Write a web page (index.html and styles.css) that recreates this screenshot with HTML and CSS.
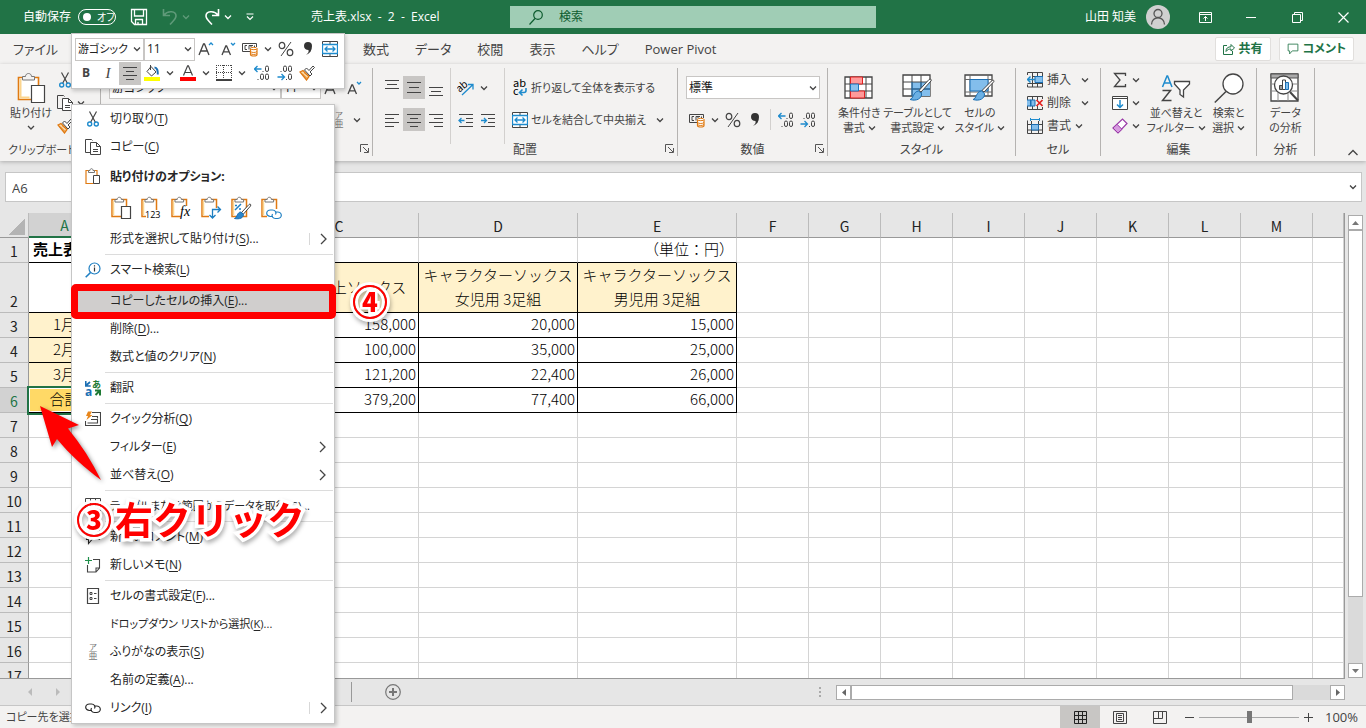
FILE: index.html
```html
<!DOCTYPE html>
<html lang="ja">
<head>
    <meta charset="UTF-8">
    <meta name="viewport" content="width=device-width, initial-scale=1.0">
    <title>売上表.xlsx - Excel</title>
    <link rel="stylesheet" href="styles.css">
</head>
<body>
    <!-- アイコン定義 -->
    <svg class="defs" aria-hidden="true">
        <symbol id="chev" viewBox="0 0 8 8"><path d="M1 2.5l3 3 3-3" fill="none" stroke="currentColor" stroke-width="1.3"/></symbol>
        <symbol id="cut" viewBox="0 0 16 16"><path d="M4.5 0.5l6 11M11.5 0.5l-6 11" stroke="#444" fill="none" stroke-width="1.2"/><circle cx="4.7" cy="13" r="2" fill="none" stroke="#1e8bcd" stroke-width="1.4"/><circle cx="11.3" cy="13" r="2" fill="none" stroke="#1e8bcd" stroke-width="1.4"/></symbol>
        <symbol id="copy" viewBox="0 0 16 16"><path d="M5.5 13.5h-5v-13h6l1 1" fill="none" stroke="#444"/><path d="M5.5 3.5h6l4 4v8h-10z" fill="#fff" stroke="#444"/><path d="M11.5 3.5v4h4M8 10.5h5M8 12.5h5" fill="none" stroke="#444"/></symbol>
        <symbol id="brush" viewBox="0 0 16 16"><path d="M1 7l3-1.5 6 6L7.5 15z" fill="#fbd8a5" stroke="#e07a12" stroke-width="1.3"/><path d="M3 8.5l5 5M5 7.5l5 4" stroke="#e07a12"/><path d="M5.5 5l2-2 2.500 2.500L14 1l1.500 1.500L11 7l2 2-2 2z" fill="#fff" stroke="#444"/></symbol>
        <symbol id="paste" viewBox="0 0 30 32"><path d="M2.5 5.5h20v22h-20z" fill="#fff" stroke="#e07a12" stroke-width="1.6"/><path d="M4.500 7v18.500h9" fill="none" stroke="#fbd58f" stroke-width="2"/><path d="M6.500 8V4.500h3c0-4 6-4 6 0h3V8z" fill="#f3f2f1" stroke="#777"/><path d="M15.500 13.500h13v17h-13z" fill="#fff" stroke="#444" stroke-width="1.200"/></symbol>
        <symbol id="clipbase" viewBox="0 0 22 24"><path d="M2 3.5h14.5v17H2z" fill="#fff" stroke="#e07a12" stroke-width="1.5"/><path d="M3.5 5v14" stroke="#fbd58f" stroke-width="1.5"/><path d="M5 6V3.5h2.200c0-3 4.200-3 4.200 0h2.200V6z" fill="#fff" stroke="#777"/></symbol>
        <symbol id="growA" viewBox="0 0 16 16"><path d="M1 14L5.5 3h1L11 14M2.8 10h6.5" fill="none" stroke="#444" stroke-width="1.3"/><path d="M11 4l2-2 2 2" fill="none" stroke="#1e8bcd" stroke-width="1.3"/></symbol>
        <symbol id="shrinkA" viewBox="0 0 16 16"><path d="M2 14L5.8 5h.8L10.5 14M3.5 10.8H9" fill="none" stroke="#444" stroke-width="1.3"/><path d="M11 2l2 2 2-2" fill="none" stroke="#1e8bcd" stroke-width="1.3"/></symbol>
        <symbol id="money" viewBox="0 0 16 16"><path d="M8 10.5H.5v-8h14V6" fill="none" stroke="#444"/><path d="M5 4.5H3v4h2M9 4.5H7v4M9 6.5v-2h2M12.5 4.5V6" fill="none" stroke="#444"/><path d="M8.5 8v5.5c0 2 6.500 2 6.500 0V8z" fill="#fff" stroke="#e07a12" stroke-width="1.2"/><ellipse cx="11.75" cy="7.5" rx="3.2" ry="1.2" fill="#fff" stroke="#e07a12"/><path d="M8.5 10.5c1 1.300 5.500 1.300 6.500 0M8.500 12.500c1 1.300 5.500 1.300 6.500 0" fill="none" stroke="#e07a12"/></symbol>
        <symbol id="percent" viewBox="0 0 16 16"><path d="M3 15L13 1" stroke="#444"/><ellipse cx="4" cy="4.5" rx="2.8" ry="3.2" fill="none" stroke="#444" stroke-width="1.2"/><ellipse cx="12" cy="11.5" rx="2.8" ry="3.2" fill="none" stroke="#444" stroke-width="1.2"/></symbol>
        <symbol id="comma" viewBox="0 0 16 16"><path d="M4 5a4 4 0 1 1 8 0c0 4.500-2 7.500-6 9 2-1.500 3-3 2.500-5C6 9 4 7.500 4 5z" fill="#333"/></symbol>
        <symbol id="merge" viewBox="0 0 16 16"><path d="M.5.5h15v15H.5zM8 .5v3M8 12.5v3" fill="#fff" stroke="#444"/><path d="M.5 3.5h15v9H.5z" fill="#fff" stroke="#1e8bcd" stroke-width="1.3"/><path d="M3 8h10M5.500 5.500L3 8l2.500 2.500M10.500 5.500L13 8l-2.500 2.500" fill="none" stroke="#1e8bcd" stroke-width="1.3"/></symbol>
        <symbol id="center" viewBox="0 0 16 16"><path d="M1 2.5h14M4 6.5h8M1 10.5h14M4 14.5h8" stroke="#444"/></symbol>
        <symbol id="left" viewBox="0 0 16 16"><path d="M1 2.5h14M1 6.5h9M1 10.5h14M1 14.5h9" stroke="#444"/></symbol>
        <symbol id="right" viewBox="0 0 16 16"><path d="M1 2.5h14M6 6.5h9M1 10.5h14M6 14.5h9" stroke="#444"/></symbol>
        <symbol id="vtop" viewBox="0 0 16 16"><path d="M1 .5h14M3 4.5h10M1 8.5h14" stroke="#444"/></symbol>
        <symbol id="vmid" viewBox="0 0 16 16"><path d="M1 2.5h14M3 7.5h10M1 12.5h14" stroke="#444"/></symbol>
        <symbol id="vbot" viewBox="0 0 16 16"><path d="M1 7.5h14M3 11.5h10M1 15.5h14" stroke="#444"/></symbol>
        <symbol id="fill" viewBox="0 0 16 16"><path d="M0 12h16v4H0z" fill="#ff0"/><path d="M7 1.5L12 7 7.5 11 3 6.5z" fill="#fff" stroke="#444"/><path d="M6.5 0v5" stroke="#444"/><path d="M10.5 2.5c2.500 0 3.500 3 3.300 7" fill="none" stroke="#1b6fb3" stroke-width="2"/></symbol>
        <symbol id="fontcolor" viewBox="0 0 16 16"><path d="M0 12h16v4H0z" fill="#f00"/><path d="M3.5 10.5L7.6.8h.8l4.100 9.700M5 7.500h6" fill="none" stroke="#444" stroke-width="1.2"/></symbol>
        <symbol id="border" viewBox="0 0 16 16"><path d="M.5 0v14M15.5 0v14M7.5 0v14M0 .5h16M0 7.5h16" stroke="#444" stroke-dasharray="1 1" fill="none"/><path d="M0 15h16" stroke="#000" stroke-width="1.5"/></symbol>
        <symbol id="decup" viewBox="0 0 16 16"><path d="M.5 4h7M3.500 1l-3 3 3 3" fill="none" stroke="#1e8bcd" stroke-width="1.3"/><g fill="none" stroke="#444"><path d="M8.5 6.5h1"/><rect x="11.5" y="1" width="3" height="5.5" rx="1.5"/><path d="M3.5 14.5h1"/><rect x="6.5" y="9" width="3" height="5.5" rx="1.5"/><rect x="11.5" y="9" width="3" height="5.5" rx="1.5"/></g></symbol>
        <symbol id="decdown" viewBox="0 0 16 16"><path d="M.5 12h7M4.500 9l3 3-3 3" fill="none" stroke="#1e8bcd" stroke-width="1.3"/><g fill="none" stroke="#444"><path d="M3.5 6.5h1"/><rect x="6.5" y="1" width="3" height="5.5" rx="1.5"/><rect x="11.5" y="1" width="3" height="5.5" rx="1.5"/><path d="M9 14.5h1"/><rect x="11.5" y="9" width="3" height="5.5" rx="1.5"/></g></symbol>
        <symbol id="outdent" viewBox="0 0 16 16"><path d="M1 2.5h14M8 6.5h7M8 10.5h7M1 14.5h14" stroke="#444"/><path d="M1 8.5h5.5M3.500 6L1 8.500 3.500 11" stroke="#1e8bcd" fill="none" stroke-width="1.3"/></symbol>
        <symbol id="indent" viewBox="0 0 16 16"><path d="M1 2.5h14M8 6.5h7M8 10.5h7M1 14.5h14" stroke="#444"/><path d="M1 8.5h5.5M4 6l2.500 2.500L4 11" stroke="#1e8bcd" fill="none" stroke-width="1.3"/></symbol>
        <symbol id="orient" viewBox="0 0 18 16"><text x="0" y="10" class="ic-text" font-size="10" transform="rotate(-40 5 8)">ab</text><path d="M5 15L16 4.500M11 4.500h5v5" fill="none" stroke="#1e8bcd" stroke-width="1.3"/></symbol>
        <symbol id="wrap" viewBox="0 0 16 18"><text x="1" y="8" class="ic-text" font-size="11">ab</text><text x="1" y="16" class="ic-text" font-size="11">c</text><path d="M14 9v2.500c0 1.500-1 2-2 2H8M10.500 10.500l-3 3 3 3" fill="none" stroke="#1e8bcd" stroke-width="1.6"/></symbol>
        <symbol id="launch" viewBox="0 0 9 9"><path d="M.5 8V.5H8M3 3l5 5M8.500 4v4.500H4" fill="none" stroke="#555"/></symbol>
        <symbol id="cond" viewBox="0 0 30 24"><path d="M1 1h27v21H1z" fill="#fff" stroke="#444" stroke-width="1.3"/><path d="M1 8h27M1 15h27M6 1v21M22 1v21" stroke="#444"/><path d="M6.5 1h12v7h-12zM6.5 15h14v7h-14z" fill="#ff9a9a" stroke="#e02020"/><path d="M6.5 8h8v7h-8z" fill="#8cc1ec" stroke="#1b76bd"/></symbol>
        <symbol id="fmttable" viewBox="0 0 32 28"><path d="M1 1h27v21H1z" fill="#fff" stroke="#444" stroke-width="1.3"/><path d="M10 8h18v14H10z" fill="#83beec"/><path d="M1 8h27M1 15h27M10 1v21M19 1v21" stroke="#444"/><path d="M10 15h18M19 8v14M10 8v14" stroke="#1b6fb3"/><path d="M29 7L19 18l-2-1.500L27 5.500c1.500-1 3 0 2 1.500z" fill="#fff" stroke="#444"/><path d="M16.500 17l3 2.500c.5 5-5 8-11.500 6 3.500-.5 3-8 8.500-8.500z" fill="#6bb0e4" stroke="#1b6fb3"/></symbol>
        <symbol id="cellstyle" viewBox="0 0 32 28"><path d="M1 1h27v21H1z" fill="#fff" stroke="#444" stroke-width="1.3"/><path d="M1 5.5h27M1 18h27M6 1v21M24 1v21" stroke="#666"/><path d="M6 5.5h18V17H6z" fill="#83beec" stroke="#1b6fb3"/><path d="M29.500 8L20 18l-2-1.500L27.500 7c1.500-1.500 3.500-.5 2 1z" fill="#fff" stroke="#444"/><path d="M17.500 17l3 2.500c.5 5-5 8-11.500 6 3.500-.5 3-8 8.500-8.500z" fill="#6bb0e4" stroke="#1b6fb3"/></symbol>
        <symbol id="cins" viewBox="0 0 16 16"><path d="M.5 3V.5h15V15H.5v-2.500M5.5.5V15M10.5.5V15M5 4.500h10.500M.5 11.500h15" fill="none" stroke="#444"/><path d="M8 4.500h8v6H8z" fill="#83beec" stroke="#1b6fb3"/><path d="M0 7.500h8M3.500 4.500l-3 3 3 3" fill="none" stroke="#1e8bcd" stroke-width="1.5"/></symbol>
        <symbol id="cdel" viewBox="0 0 16 16"><path d="M.5 5V1.500h15V4M5.500 1.500V5M10.500 1.500V5M.5 11v3.500h15V12M5.500 14.500V11M10.500 14.500V11" fill="none" stroke="#444"/><path d="M0 5h4v6H0M8 5H3.500v6H8z" fill="#83beec" stroke="#1b6fb3"/><path d="M9.500 5l6 6M15.500 5l-6 6" stroke="#e02020" stroke-width="1.6"/></symbol>
        <symbol id="cfmt" viewBox="0 0 16 16"><path d="M.5 2.500v13h15v-13M4.500 3v12.500M11.500 3v12.500M.5 6.500h15M.5 12h15" fill="none" stroke="#444"/><path d="M4.500 6.500h7V12h-7z" fill="#83beec" stroke="#1b6fb3"/><path d="M3.500 0v3M12.500 0v3M3.500 1.500h9" stroke="#1e8bcd"/></symbol>
        <symbol id="sigma" viewBox="0 0 16 16"><path d="M13.500 4V1.500H2.500L8 8l-5.500 6.500h11V12" fill="none" stroke="#444" stroke-width="1.3"/></symbol>
        <symbol id="filldown" viewBox="0 0 16 16"><path d="M.5 1.500h15v13H.5zM.5 3.500h15" fill="#fff" stroke="#444"/><path d="M8 5v7M5 9.500l3 3 3-3" fill="none" stroke="#1e8bcd" stroke-width="1.5"/></symbol>
        <symbol id="eraser" viewBox="0 0 16 16"><path d="M1 10l9.500-9L15 5.500 6 15z" fill="#fff" stroke="#9a3aa8" stroke-width="1.2"/><path d="M1 10l4-3.700 5 5L6 15z" fill="#d79be0" stroke="#9a3aa8"/></symbol>
        <symbol id="sort" viewBox="0 0 30 28"><path d="M1.500 13L6 2h.6L11 13M3 9h6.500" fill="none" stroke="#1e8bcd" stroke-width="1.5"/><path d="M1.500 16.500h8l-8 10h9" fill="none" stroke="#444" stroke-width="1.5"/><path d="M13.500 7.500h15V10l-6 6v7L19 20.500V16l-5.500-6z" fill="#fff" stroke="#444" stroke-width="1.3"/></symbol>
        <symbol id="find" viewBox="0 0 30 30"><circle cx="19" cy="11" r="10" fill="#fff" stroke="#444" stroke-width="1.3"/><path d="M12 18.500L.8 29.500" stroke="#444" stroke-width="1.5"/></symbol>
        <symbol id="analyze" viewBox="0 0 30 30"><path d="M1 1h27v27H1z" fill="#fff" stroke="#444" stroke-width="1.3"/><path d="M1 1h27v4H1z" fill="#aaa" stroke="#555"/><path d="M1 11h27M1 18h27M8 5v23M18 18v10" stroke="#888"/><circle cx="13.500" cy="12" r="9" fill="#fff" stroke="#444" stroke-width="1.3"/><path d="M20 19l8 8.500" stroke="#444" stroke-width="2"/><path d="M9.500 12.500h3v4h-3z" fill="#999" stroke="#444"/><path d="M12.500 7h3v9.500h-3z" fill="#fff" stroke="#444"/><path d="M15.500 9.500h3v7h-3z" fill="#83beec" stroke="#1b6fb3"/></symbol>
        <symbol id="arrowr" viewBox="0 0 8 12"><path d="M1 1l5 5-5 5" fill="none" stroke="#444" stroke-width="1.3"/></symbol>
        <symbol id="smart" viewBox="0 0 16 16"><circle cx="9.500" cy="6.500" r="5.500" fill="#fff" stroke="#1e7fc2" stroke-width="1.2"/><path d="M5.500 10.500L.7 15.300" stroke="#1e7fc2" stroke-width="1.6"/><path d="M9.500 5.500v4M9.500 3.300v1.200" stroke="#333" stroke-width="1.2"/></symbol>
        <symbol id="translate" viewBox="0 0 16 16"><path d="M.7 1v5h5M1 5.500L5 2" stroke="#1b6fb3" stroke-width="1.7" fill="none"/><text x="0" y="15.500" font-size="12" font-weight="bold" fill="#1b6fb3" class="ic-latin">a</text><text x="7" y="8" font-size="9" font-weight="bold" fill="#1e7a34" class="ic-text">あ</text><path d="M10 10.500h5v5M14.500 11L10.500 15" stroke="#1e7a34" stroke-width="2" fill="none"/></symbol>
        <symbol id="quick" viewBox="0 0 16 16"><path d="M7 1.500h8.500v13H.5V10M7 5.500h5.500v2M2.500 12h10V8.500H6" fill="none" stroke="#444" stroke-width="1.1"/><path d="M3 .5h4L5 4h2.500l-6 5L3 5H1z" fill="#e8861a"/></symbol>
        <symbol id="gettable" viewBox="0 0 16 16"><path d="M.5.5h15v13H.5zM.5 4.500h15M5.500.5v13M10.500.5v13M.5 9h15" fill="none" stroke="#444"/></symbol>
        <symbol id="comment" viewBox="0 0 16 16"><path d="M1.500 1.500h13v9H7l-3.500 4v-4h-2z" fill="none" stroke="currentColor" stroke-width="1.1"/></symbol>
        <symbol id="memo" viewBox="0 0 16 16"><path d="M8 2.500h6.500V11L11 15H2.500V8M11 15v-4h3.500" fill="none" stroke="#444" stroke-width="1.1"/><path d="M3.500 0v7M0 3.500h7" stroke="#1e8f4a" stroke-width="1.2"/></symbol>
        <symbol id="cellfmt" viewBox="0 0 16 16"><path d="M2.500.5h11v15h-11z" fill="#fff" stroke="#444" stroke-width="1.2"/><path d="M5 4.500h2v2H5zM5 9.500h2v2H5z" fill="none" stroke="#444"/><path d="M9 5.500h2.500M9 10.500h2.500" stroke="#444"/></symbol>
        <symbol id="furi" viewBox="0 0 16 18"><text x="8" y="7" font-size="8" text-anchor="middle" class="ic-gray">ア</text><text x="8" y="16" font-size="9" text-anchor="middle" class="ic-gray">亜</text></symbol>
        <symbol id="link" viewBox="0 0 16 16"><path d="M7 10.500H4.500a3.500 3 0 0 1 0-6.500h2a3.500 3 0 0 1 3 4.500M9 6h2.500a3.500 3 0 0 1 0 6.500h-2a3.500 3 0 0 1-3-4.500" fill="none" stroke="currentColor" stroke-width="1.2"/></symbol>
    </svg>

    <div class="app">
        <header class="titlebar">
            <div class="quick-access">
                <label class="autosave">自動保存
                    <input type="checkbox">
                    <span class="toggle">オフ</span>
                </label>
                <button class="tb-btn" aria-label="上書き保存"><svg width="18" height="18" viewBox="0 0 18 18"><path d="M1.500 1.500h15v15h-12l-3-3zM4.500 1.500V8h9V1.500M5.500 16.500v-5h7v5M8 14v2" fill="none" stroke="#fff" stroke-width="1.3"/></svg></button>
                <button class="tb-btn dim" aria-label="元に戻す"><svg width="16" height="18" viewBox="0 0 16 18"><path d="M1.500 1v6.500H8M2 7c4-5 12-4 12 1 0 3-3 5-6 8.500" fill="none" stroke="currentColor" stroke-width="1.6"/></svg><svg width="8" height="8"><use href="#chev"/></svg></button>
                <button class="tb-btn" aria-label="やり直し"><svg width="16" height="18" viewBox="0 0 16 18"><path d="M14.500 1v6.500H8M14 7c-4-5-12-4-12 1 0 3 3 5 6 8.500" fill="none" stroke="currentColor" stroke-width="1.6"/></svg><svg width="8" height="8"><use href="#chev"/></svg></button>
                <button class="tb-btn" aria-label="クイック アクセス ツール バーのカスタマイズ"><svg width="8" height="8" viewBox="0 0 8 8"><path d="M.5 1h7M1 3.500l3 3 3-3" fill="none" stroke="#fff" stroke-width="1.2"/></svg></button>
            </div>
            <div class="doc-title">売上表.xlsx&nbsp; -&nbsp; 2&nbsp; -&nbsp; Excel</div>
            <label class="search">
                <svg width="14" height="15" viewBox="0 0 14 15"><circle cx="9" cy="5" r="4.300" fill="none" stroke="#0e5c2f" stroke-width="1.2"/><path d="M6 8.500l-5.500 6" stroke="#0e5c2f" stroke-width="1.2"/></svg>
                <input type="text" placeholder="検索" aria-label="検索">
            </label>
            <div class="account">
                <span class="user">山田 知美</span>
                <span class="avatar"><svg width="16" height="18" viewBox="0 0 16 18"><circle cx="8" cy="5.500" r="4" fill="none" stroke="#555" stroke-width="1.3"/><path d="M1.500 16.500c0-9 13-9 13 0" fill="none" stroke="#555" stroke-width="1.3"/></svg></span>
            </div>
            <div class="window-btns">
                <button aria-label="リボンの表示オプション"><svg width="13" height="11" viewBox="0 0 13 11"><path d="M.5.5h12v10H.5zM.5 2.500h12M6.500 9V4.500M4.500 6.500l2-2 2 2" fill="none" stroke="#fff"/></svg></button>
                <button aria-label="最小化"><svg width="11" height="11" viewBox="0 0 11 11"><path d="M0 5.500h10" stroke="#fff"/></svg></button>
                <button aria-label="元に戻す (縮小)"><svg width="11" height="11" viewBox="0 0 11 11"><path d="M.5 2.500h8v8h-8zM2.500 2.500v-2h8v8h-2" fill="none" stroke="#fff"/></svg></button>
                <button aria-label="閉じる"><svg width="11" height="11" viewBox="0 0 11 11"><path d="M.5.5l10 10M10.500.5l-10 10" stroke="#fff" stroke-width="1.2"/></svg></button>
            </div>
        </header>

        <nav class="tabs">
            <div class="tabs-front">
                <button>ファイル</button><button>ホーム</button><button>挿入</button><button>ページ レイアウト</button>
            </div>
            <button>数式</button>
            <button>データ</button>
            <button>校閲</button>
            <button>表示</button>
            <button>ヘルプ</button>
            <button>Power Pivot</button>
            <div class="tab-actions">
                <button><svg width="12" height="12" viewBox="0 0 12 12"><path d="M4 2.500H.5v9h9V8M3 8.500C3 5 5 3.800 8 3.800V1.500L11.500 5 8 8V6C6 6 4.500 6.500 3 8.500z" fill="none" stroke="currentColor"/></svg>共有</button>
                <button><svg width="12" height="12"><use href="#comment"/></svg>コメント</button>
            </div>
        </nav>

        <section class="ribbon">
            <div class="group g-clip">
                <div class="group-body">
                    <button class="big"><svg width="30" height="32"><use href="#paste"/></svg><span>貼り付け</span><svg width="8" height="15"><use href="#chev"/></svg></button>
                    <div class="stack">
                        <button aria-label="切り取り"><svg width="16" height="16"><use href="#cut"/></svg></button>
                        <button aria-label="コピー"><svg width="16" height="16"><use href="#copy"/></svg><svg width="8" height="8"><use href="#chev"/></svg></button>
                        <button aria-label="書式のコピー"><svg width="16" height="16"><use href="#brush"/></svg></button>
                    </div>
                </div>
                <div class="group-name">クリップボード</div>
            </div>
            <div class="group g-font">
                <div class="group-body rows">
                    <div class="row">
                        <span class="combo font-name"><select aria-label="フォント"><option>游ゴシック</option></select><svg width="8" height="8"><use href="#chev"/></svg></span>
                        <span class="combo font-size"><select aria-label="フォント サイズ"><option>11</option></select><svg width="8" height="8"><use href="#chev"/></svg></span>
                        <button class="ib"><svg width="16" height="16"><use href="#growA"/></svg></button>
                        <button class="ib"><svg width="16" height="16"><use href="#shrinkA"/></svg></button>
                    </div>
                    <div class="row end">
                        <button class="ib"><svg width="16" height="18"><use href="#furi"/></svg></button>
                        <button class="cb"><svg width="8" height="8"><use href="#chev"/></svg></button>
                    </div>
                </div>
                <div class="group-name">フォント<svg class="launch" width="9" height="9"><use href="#launch"/></svg></div>
            </div>
            <div class="group g-align">
                <div class="group-body">
                    <div class="align-grid">
                        <button class="ib"><svg width="16" height="16"><use href="#vtop"/></svg></button>
                        <button class="ib on"><svg width="16" height="16"><use href="#vmid"/></svg></button>
                        <button class="ib"><svg width="16" height="16"><use href="#vbot"/></svg></button>
                        <button class="ib"><svg width="16" height="16"><use href="#left"/></svg></button>
                        <button class="ib on"><svg width="16" height="16"><use href="#center"/></svg></button>
                        <button class="ib"><svg width="16" height="16"><use href="#right"/></svg></button>
                    </div>
                    <div class="rows divided">
                        <div class="row"><button class="ib"><svg width="18" height="16"><use href="#orient"/></svg></button><button class="cb"><svg width="8" height="8"><use href="#chev"/></svg></button></div>
                        <div class="row"><button class="ib"><svg width="16" height="16"><use href="#outdent"/></svg></button><button class="ib"><svg width="16" height="16"><use href="#indent"/></svg></button></div>
                    </div>
                    <div class="rows divided">
                        <button class="text-btn"><svg width="16" height="18"><use href="#wrap"/></svg>折り返して全体を表示する</button>
                        <button class="text-btn"><svg width="16" height="16"><use href="#merge"/></svg>セルを結合して中央揃え<svg class="gap" width="8" height="8"><use href="#chev"/></svg></button>
                    </div>
                </div>
                <div class="group-name">配置<svg class="launch" width="9" height="9"><use href="#launch"/></svg></div>
            </div>
            <div class="group g-num">
                <div class="group-body rows">
                    <div class="row"><span class="combo num-fmt"><select aria-label="表示形式"><option>標準</option></select><svg width="8" height="8"><use href="#chev"/></svg></span></div>
                    <div class="row">
                        <button class="ib"><svg width="16" height="16"><use href="#money"/></svg></button>
                        <button class="cb"><svg width="8" height="8"><use href="#chev"/></svg></button>
                        <button class="ib"><svg width="16" height="16"><use href="#percent"/></svg></button>
                        <button class="ib"><svg width="16" height="16"><use href="#comma"/></svg></button>
                        <span class="vline"></span>
                        <button class="ib"><svg width="16" height="16"><use href="#decup"/></svg></button>
                        <button class="ib"><svg width="16" height="16"><use href="#decdown"/></svg></button>
                    </div>
                </div>
                <div class="group-name">数値<svg class="launch" width="9" height="9"><use href="#launch"/></svg></div>
            </div>
            <div class="group g-style">
                <div class="group-body">
                    <button class="big"><svg width="30" height="32"><use href="#cond"/></svg><span>条件付き</span><span>書式 <svg width="8" height="8"><use href="#chev"/></svg></span></button>
                    <button class="big"><svg width="32" height="32"><use href="#fmttable"/></svg><span>テーブルとして</span><span>書式設定 <svg width="8" height="8"><use href="#chev"/></svg></span></button>
                    <button class="big"><svg width="32" height="32"><use href="#cellstyle"/></svg><span>セルの</span><span>スタイル <svg width="8" height="8"><use href="#chev"/></svg></span></button>
                </div>
                <div class="group-name">スタイル</div>
            </div>
            <div class="group g-cell">
                <div class="group-body">
                    <div class="stack">
                        <button><svg width="16" height="16"><use href="#cins"/></svg>挿入<svg class="gap" width="8" height="8"><use href="#chev"/></svg></button>
                        <button><svg width="16" height="16"><use href="#cdel"/></svg>削除<svg class="gap" width="8" height="8"><use href="#chev"/></svg></button>
                        <button><svg width="16" height="16"><use href="#cfmt"/></svg>書式<svg width="8" height="8"><use href="#chev"/></svg></button>
                    </div>
                </div>
                <div class="group-name">セル</div>
            </div>
            <div class="group g-edit">
                <div class="group-body">
                    <div class="stack">
                        <button aria-label="合計"><svg width="16" height="16"><use href="#sigma"/></svg><svg width="8" height="8"><use href="#chev"/></svg></button>
                        <button aria-label="フィル"><svg width="16" height="16"><use href="#filldown"/></svg><svg width="8" height="8"><use href="#chev"/></svg></button>
                        <button aria-label="クリア"><svg width="16" height="16"><use href="#eraser"/></svg><svg width="8" height="8"><use href="#chev"/></svg></button>
                    </div>
                    <button class="big"><svg width="30" height="32"><use href="#sort"/></svg><span>並べ替えと</span><span>フィルター <svg width="8" height="8"><use href="#chev"/></svg></span></button>
                    <button class="big"><svg width="30" height="32"><use href="#find"/></svg><span>検索と</span><span>選択 <svg width="8" height="8"><use href="#chev"/></svg></span></button>
                </div>
                <div class="group-name">編集</div>
            </div>
            <div class="group g-data">
                <div class="group-body">
                    <button class="big"><svg width="30" height="32"><use href="#analyze"/></svg><span>データ</span><span>の分析</span></button>
                </div>
                <div class="group-name">分析</div>
            </div>
            <button class="collapse" aria-label="リボンを折りたたむ"><svg width="10" height="7" viewBox="0 0 10 7"><path d="M.5 6L5 1.500 9.500 6" fill="none" stroke="#444" stroke-width="1.3"/></svg></button>
        </section>

        <div class="formula-bar">
            <input class="name-box" type="text" value="A6" aria-label="名前ボックス">
            <label class="formula"><input type="text" aria-label="数式バー"><svg width="8" height="8"><use href="#chev"/></svg></label>
        </div>

        <main class="sheet">
            <div class="grid-wrap">
                <table class="grid">
                    <colgroup>
                        <col class="w-head"><col class="w-std"><col class="w-wide"><col class="w-wide"><col class="w-wide"><col class="w-wide">
                        <col class="w-std"><col class="w-std"><col class="w-std"><col class="w-std"><col class="w-std"><col class="w-std"><col class="w-std"><col class="w-std"><col>
                    </colgroup>
                    <thead>
                        <tr><th class="corner"></th><th class="sel">A</th><th>B</th><th>C</th><th>D</th><th>E</th><th>F</th><th>G</th><th>H</th><th>I</th><th>J</th><th>K</th><th>L</th><th>M</th><th></th></tr>
                    </thead>
                    <tbody>
                        <tr class="above-table"><th>1</th><td class="sheet-title">売上表</td><td></td><td></td><td></td><td class="num">（単位：円）</td></tr>
                        <tr class="data tall"><th>2</th><td></td><td class="head"></td><td class="head">子ども陸上ソックス</td><td class="head">キャラクターソックス<br>女児用 3足組</td><td class="head">キャラクターソックス<br>男児用 3足組</td></tr>
                        <tr class="data"><th>3</th><td class="head">1月</td><td></td><td class="num">158,000</td><td class="num">20,000</td><td class="num">15,000</td></tr>
                        <tr class="data"><th>4</th><td class="head">2月</td><td></td><td class="num">100,000</td><td class="num">35,000</td><td class="num">25,000</td></tr>
                        <tr class="data"><th>5</th><td class="head">3月</td><td></td><td class="num">121,200</td><td class="num">22,400</td><td class="num">26,000</td></tr>
                        <tr class="data"><th class="sel">6</th><td class="active">合計</td><td></td><td class="num">379,200</td><td class="num">77,400</td><td class="num">66,000</td></tr>
                    </tbody>
                </table>
            </div>
            <div class="vscroll">
                <button aria-label="上へ"><svg width="7" height="4" viewBox="0 0 7 4"><path d="M0 4L3.500 0 7 4z" fill="#777"/></svg></button>
                <span class="vthumb"></span>
                <span class="vtrack"></span>
                <button aria-label="下へ"><svg width="7" height="4" viewBox="0 0 7 4"><path d="M0 0l3.500 4L7 0z" fill="#777"/></svg></button>
            </div>
        </main>

        <div class="sheet-tabs">
            <button class="nav-arrow" aria-label="前のシート"><svg width="4" height="8" viewBox="0 0 4 8"><path d="M4 0v8L0 4z" fill="#bbb"/></svg></button>
            <button class="nav-arrow" aria-label="次のシート"><svg width="4" height="8" viewBox="0 0 4 8"><path d="M0 0v8l4-4z" fill="#bbb"/></svg></button>
            <button class="sheet-tab">Sheet1</button>
            <button class="add-sheet" aria-label="新しいシート"><svg width="16" height="16" viewBox="0 0 16 16"><circle cx="8" cy="8" r="7.300" fill="none" stroke="#777" stroke-width="1.2"/><path d="M8 4v8M4 8h8" stroke="#777" stroke-width="2"/></svg></button>
            <div class="hscroll">
                <svg width="2" height="11" viewBox="0 0 2 11"><path d="M0 0h2v2H0zM0 4h2v2H0zM0 8h2v2H0z" fill="#aaa"/></svg>
                <button aria-label="左へ"><svg width="4" height="7" viewBox="0 0 4 7"><path d="M4 0v7L0 3.500z" fill="#666"/></svg></button>
                <span class="hthumb"></span>
                <span class="htrack"></span>
                <button aria-label="右へ"><svg width="4" height="7" viewBox="0 0 4 7"><path d="M0 0v7l4-3.500z" fill="#666"/></svg></button>
            </div>
        </div>

        <footer class="status">
            <span class="status-text">コピー先を選択し、Enter キーを押すか</span>
            <div class="views">
                <button class="on" aria-label="標準"><svg width="13" height="13" viewBox="0 0 13 13"><path d="M.5.5h12v12H.5zM.5 4.500h12M.5 8.500h12M4.500.5v12M8.500.5v12" fill="none" stroke="#222"/></svg></button>
                <button aria-label="ページ レイアウト"><svg width="14" height="13" viewBox="0 0 14 13"><path d="M.5.5h13v12H.5zM3.500 2.500h7v8h-7zM5 4.500h4M5 6.500h4M5 8.500h4" fill="none" stroke="#444"/></svg></button>
                <button aria-label="改ページ プレビュー"><svg width="14" height="13" viewBox="0 0 14 13"><path d="M.5.5h13v12H.5zM.5 7.500h9v-7M5.500.5v7" fill="none" stroke="#444"/></svg></button>
            </div>
            <div class="zoom">
                <button aria-label="縮小"><svg width="9" height="9" viewBox="0 0 9 9"><path d="M0 4.500h9" stroke="#444"/></svg></button>
                <input type="range" min="0" max="100" value="50" aria-label="ズーム">
                <button aria-label="拡大"><svg width="9" height="9" viewBox="0 0 9 9"><path d="M0 4.500h9M4.500 0v9" stroke="#444"/></svg></button>
                <span class="pct">100%</span>
            </div>
        </footer>
    </div>

    <!-- ミニ ツール バー -->
    <div class="minibar">
        <div class="row">
            <span class="combo mini-font"><select aria-label="フォント"><option>游ゴシック</option></select><svg width="8" height="8"><use href="#chev"/></svg></span>
            <span class="combo mini-size"><select aria-label="サイズ"><option>11</option></select><svg width="8" height="8"><use href="#chev"/></svg></span>
            <button class="ib"><svg width="16" height="16"><use href="#growA"/></svg></button>
            <button class="ib"><svg width="16" height="16"><use href="#shrinkA"/></svg></button>
            <button class="ib"><svg width="16" height="16"><use href="#money"/></svg></button>
            <button class="cb"><svg width="8" height="8"><use href="#chev"/></svg></button>
            <button class="ib"><svg width="16" height="16"><use href="#percent"/></svg></button>
            <button class="ib"><svg width="16" height="16"><use href="#comma"/></svg></button>
            <button class="ib"><svg width="16" height="16"><use href="#merge"/></svg></button>
        </div>
        <div class="row">
            <button class="ib bold">B</button>
            <button class="ib italic">I</button>
            <button class="ib on"><svg width="16" height="16"><use href="#center"/></svg></button>
            <button class="ib"><svg width="16" height="16"><use href="#fill"/></svg></button>
            <button class="cb"><svg width="8" height="8"><use href="#chev"/></svg></button>
            <button class="ib"><svg width="16" height="16"><use href="#fontcolor"/></svg></button>
            <button class="cb"><svg width="8" height="8"><use href="#chev"/></svg></button>
            <button class="ib"><svg width="16" height="16"><use href="#border"/></svg></button>
            <button class="cb"><svg width="8" height="8"><use href="#chev"/></svg></button>
            <button class="ib wide"><svg width="16" height="16"><use href="#decup"/></svg></button>
            <button class="ib"><svg width="16" height="16"><use href="#decdown"/></svg></button>
            <button class="ib"><svg width="16" height="16"><use href="#brush"/></svg></button>
        </div>
    </div>

    <!-- 右クリックメニュー -->
    <div class="menu">
        <button><svg width="16" height="16"><use href="#cut"/></svg><span>切り取り(<u>T</u>)</span></button>
        <button><svg width="16" height="16"><use href="#copy"/></svg><span>コピー(<u>C</u>)</span></button>
        <div class="menu-title"><svg width="16" height="18" viewBox="0 0 16 18"><path d="M1 2.500h11v13H1z" fill="#fff" stroke="#e07a12" stroke-width="1.2"/><path d="M3.500 4.500v-2H5c0-2.500 3-2.500 3 0h1.500v2z" fill="#fff" stroke="#777"/><path d="M8.500 7.500h6v8h-6z" fill="#fff" stroke="#444"/></svg><span>貼り付けのオプション:</span></div>
        <div class="paste-opts">
            <button aria-label="貼り付け"><svg width="22" height="24" viewBox="0 0 22 24"><use href="#clipbase" width="22" height="24"/><path d="M11.500 10.500h9v12h-9z" fill="#fff" stroke="#444" stroke-width="1.2"/></svg></button>
            <button aria-label="値"><svg width="22" height="24" viewBox="0 0 22 24"><use href="#clipbase" width="22" height="24"/><path d="M6 14h16v10H6z" fill="#fff"/><text x="5" y="22" font-size="9" class="ic-latin">123</text></svg></button>
            <button aria-label="数式"><svg width="22" height="24" viewBox="0 0 22 24"><use href="#clipbase" width="22" height="24"/><path d="M11 10h10v13H11z" fill="#fff"/><text x="10" y="20" font-size="14" class="ic-fx">fx</text></svg></button>
            <button aria-label="行/列の入れ替え"><svg width="22" height="24" viewBox="0 0 22 24"><use href="#clipbase" width="22" height="24"/><path d="M9 12h12v11H9z" fill="#fff"/><path d="M12.500 22v-8.500h8M17.500 10.500l3 3-3 3M9.500 19l3 3 3-3" fill="none" stroke="#1e7fc2" stroke-width="1.3"/></svg></button>
            <button aria-label="書式設定"><svg width="22" height="24" viewBox="0 0 22 24"><use href="#clipbase" width="22" height="24"/><path d="M5 14l6-6M5 9.500h2M9 13h2" stroke="#1e7fc2" stroke-width="1.5"/><path d="M20.500 10l-7 8-2-1.500 7.500-8c1-1 2.500 0 1.500 1.500z" fill="#fff" stroke="#444"/><path d="M11 16l2.500 2.500c0 3.500-4 5-9 4 3-1 2.500-6.500 6.500-6.500z" fill="#2b86cb" stroke="#1b6fb3"/></svg></button>
            <button class="blue" aria-label="リンク貼り付け"><svg width="22" height="24" viewBox="0 0 22 24"><use href="#clipbase" width="22" height="24"/><path d="M7 13h14v10H7z" fill="#fff"/><use href="#link" x="6" y="10" width="16" height="16"/></svg></button>
        </div>
        <button><i></i><span>形式を選択して貼り付け(<u>S</u>)...</span><svg class="sub split" width="20" height="12"><use href="#arrowr" x="10" width="8" height="12"/></svg></button>
        <hr>
        <button><svg width="16" height="16"><use href="#smart"/></svg><span>スマート検索(<u>L</u>)</span></button>
        <hr>
        <button class="hover"><i></i><span>コピーしたセルの挿入(<u>E</u>)...</span></button>
        <button><i></i><span>削除(<u>D</u>)...</span></button>
        <button><i></i><span>数式と値のクリア(<u>N</u>)</span></button>
        <hr>
        <button><svg width="16" height="16"><use href="#translate"/></svg><span>翻訳</span></button>
        <hr>
        <button><svg width="16" height="16"><use href="#quick"/></svg><span>クイック分析(<u>Q</u>)</span></button>
        <button><i></i><span>フィルター(<u>E</u>)</span><svg class="sub" width="10" height="12"><use href="#arrowr" width="8" height="12"/></svg></button>
        <button><i></i><span>並べ替え(<u>O</u>)</span><svg class="sub" width="10" height="12"><use href="#arrowr" width="8" height="12"/></svg></button>
        <hr>
        <button><svg width="16" height="16"><use href="#gettable"/></svg><span class="long">テーブルまたは範囲からデータを取得(<u>G</u>)...</span></button>
        <hr>
        <button><svg width="16" height="16"><use href="#comment"/></svg><span>新しいコメント(<u>M</u>)</span></button>
        <button><svg width="16" height="16"><use href="#memo"/></svg><span>新しいメモ(<u>N</u>)</span></button>
        <hr>
        <button><svg width="16" height="16"><use href="#cellfmt"/></svg><span>セルの書式設定(<u>F</u>)...</span></button>
        <button><i></i><span class="long">ドロップダウン リストから選択(<u>K</u>)...</span></button>
        <button><svg width="16" height="18"><use href="#furi"/></svg><span>ふりがなの表示(<u>S</u>)</span></button>
        <button><i></i><span>名前の定義(<u>A</u>)...</span></button>
        <button><svg width="16" height="16"><use href="#link"/></svg><span>リンク(<u>I</u>)</span><svg class="sub split" width="20" height="12"><use href="#arrowr" x="10" width="8" height="12"/></svg></button>
    </div>

    <!-- 手順の注釈 -->
    <div class="mark-box"></div>
    <svg class="mark-arrow" width="64" height="78" viewBox="0 0 64 78"><path d="M1 1l39 19-11 3.500c13 16 24 33 33 51.500-16-12-31-25-44-41l-5 8z" fill="#f00"/></svg>
    <div class="mark-step4"><span class="circle">4</span></div>
    <div class="mark-step3"><span class="circle">3</span><span class="mark-text">右クリック</span></div>

    <script>
        // 空のセルと7行目以降を埋める
        const body = document.querySelector('.grid tbody');
        for (let r = 7; r <= 17; r++) {
            body.insertRow().innerHTML = `<th>${r}</th>`;
        }
        for (const row of body.rows) {
            while (row.cells.length < 15) row.insertCell();
        }
    </script>
</body>
</html>
```
FILE: styles.css
```css
* {
    box-sizing: border-box;
}
body {
    margin: 0;
    height: 100vh;
    overflow: hidden;
    position: relative;
    font-family: "Open Sans", "Noto Sans CJK JP", sans-serif;
    font-size: 12px;
    line-height: 16px;
    font-feature-settings: "palt";
    color: #444;
    background: #e6e6e6;
}
button, input, select {
    font: inherit;
    font-feature-settings: inherit;
    color: inherit;
    background: none;
    border: 0;
    margin: 0;
    padding: 0;
}
svg {
    flex: none;
}
.defs {
    display: none;
}
.ic-text {
    font-family: "Noto Sans CJK JP", sans-serif;
}
.ic-latin {
    font-family: "Open Sans", sans-serif;
}
.ic-fx {
    font-family: "Liberation Serif", serif;
    font-style: italic;
}
.ic-gray {
    font-family: "Noto Sans CJK JP", sans-serif;
    fill: #777;
}
.app {
    height: 100%;
    display: flex;
    flex-direction: column;
}

/* タイトルバー */
.titlebar {
    height: 34px;
    flex: none;
    display: flex;
    align-items: center;
    background: #217346;
    color: #fff;
}
.quick-access {
    display: flex;
    align-items: center;
    gap: 14px;
    padding-left: 23px;
    width: 311px;
}
.autosave {
    display: flex;
    align-items: center;
    gap: 7px;
    white-space: nowrap;
}
.autosave input {
    appearance: none;
    position: absolute;
}
.toggle {
    display: flex;
    align-items: center;
    gap: 6px;
    width: 38px;
    height: 16px;
    padding-left: 4px;
    border: 1px solid #fff;
    border-radius: 8px;
    font-size: 10px;
}
.toggle::before {
    content: "";
    width: 8px;
    height: 8px;
    border-radius: 50%;
    background: #fff;
}
.tb-btn {
    display: flex;
    align-items: center;
    gap: 4px;
}
.tb-btn.dim {
    color: #5f9a79;
}
.doc-title {
    width: 199px;
    white-space: nowrap;
}
.search {
    display: flex;
    align-items: center;
    gap: 16px;
    width: 366px;
    height: 22px;
    padding-left: 19px;
    background: #a0cdb5;
    color: #0e5c2f;
}
.search input {
    flex: 1;
    min-width: 0;
}
.search input::placeholder {
    color: #0e5c2f;
}
.account {
    margin-left: auto;
    display: flex;
    align-items: center;
    gap: 10px;
    padding-right: 12px;
}
.avatar {
    width: 24px;
    height: 24px;
    border-radius: 50%;
    background: #d0d0d0;
    display: flex;
    justify-content: center;
    align-items: center;
}
.window-btns {
    display: flex;
}
.window-btns button {
    width: 46px;
    height: 34px;
    display: flex;
    align-items: center;
    justify-content: center;
}

/* タブ */
.tabs {
    height: 30px;
    flex: none;
    display: flex;
    align-items: center;
    background: #f3f2f1;
    font-size: 13px;
}
.tabs button {
    padding: 0 13px;
    white-space: nowrap;
}
.tabs-front {
    width: 350px;
    display: flex;
    overflow: hidden;
}
.tabs .tab-actions {
    margin-left: auto;
    display: flex;
    gap: 8px;
    padding-right: 12px;
}
.tabs .tab-actions button {
    display: flex;
    align-items: center;
    gap: 4px;
    height: 24px;
    padding: 0 7px;
    background: #fff;
    border: 1px solid #e1dfdd;
    border-radius: 2px;
    color: #217346;
    font-size: 12px;
    font-weight: bold;
}

/* リボン */
.ribbon {
    height: 97px;
    flex: none;
    display: flex;
    padding: 4px 0 5px;
    background: #f3f2f1;
    box-shadow: 0 1px 4px rgba(0, 0, 0, 0.25);
    z-index: 1;
}
.group {
    flex: none;
    display: flex;
    flex-direction: column;
    border-right: 1px solid #b5b3b1;
}
.g-clip { width: 101px; }
.g-font { width: 272px; }
.g-align { width: 305px; }
.g-num { width: 150px; }
.g-style { width: 188px; }
.g-cell { width: 85px; }
.g-edit { width: 156px; }
.g-data { width: 58px; }
.group-body {
    flex: 1;
    min-height: 0;
    display: flex;
    padding: 0 4px;
}
.group-name {
    position: relative;
    text-align: center;
    line-height: 12px;
    white-space: nowrap;
}
.g-clip .group-name {
    font-size: 11px;
    padding-right: 16px;
}
.launch {
    position: absolute;
    right: 3px;
    top: 0;
}
.group-body.rows, .rows {
    display: flex;
    flex-direction: column;
    padding-top: 8px;
    gap: 9px;
}
.row {
    display: flex;
    align-items: center;
    height: 23px;
}
.row.end {
    justify-content: flex-end;
    padding-right: 4px;
}
.ib {
    width: 22px;
    height: 23px;
    display: flex;
    align-items: center;
    justify-content: center;
}
.ib.on {
    background: #c8c6c4;
}
.cb {
    width: 14px;
    height: 23px;
    display: flex;
    align-items: center;
    justify-content: center;
}
.combo {
    display: grid;
    align-items: center;
    height: 23px;
    background: #fff;
    border: 1px solid #c8c6c4;
}
.combo > * {
    grid-area: 1 / 1;
}
.combo select {
    appearance: none;
    width: 100%;
    padding: 0 2px;
    color: #222;
}
.combo svg {
    justify-self: end;
    margin-right: 2px;
    pointer-events: none;
}
.font-name { width: 172px; }
.font-size { width: 40px; }
.num-fmt { width: 134px; }
.g-font .group-body, .g-num .group-body {
    padding-left: 8px;
}
.align-grid {
    display: grid;
    grid-template-columns: 22px 22px 22px;
    grid-auto-rows: 23px;
    row-gap: 9px;
    padding: 8px 3px 0 4px;
}
.divided {
    border-left: 1px solid #d2d0ce;
    padding-left: 4px;
    padding-right: 4px;
    margin-right: 1px;
}
.text-btn {
    display: flex;
    align-items: center;
    gap: 3px;
    height: 23px;
    padding-left: 3px;
    font-size: 11px;
    white-space: nowrap;
}
.text-btn .gap {
    margin-left: 7px;
}
.vline {
    width: 1px;
    height: 21px;
    margin: 0 4px;
    background: #d2d0ce;
}
.big {
    display: flex;
    flex-direction: column;
    align-items: center;
    padding: 4px 0 0;
    font-size: 11px;
    line-height: 15px;
    white-space: nowrap;
}
.big > svg:first-child {
    margin-bottom: 1px;
}
.g-clip .big {
    width: 52px;
}
.g-clip .group-body {
    padding-left: 5px;
}
.g-style .group-body {
    justify-content: space-between;
    padding-left: 10px;
    padding-right: 10px;
}
.g-data .group-body {
    justify-content: center;
}
.g-edit .group-body {
    justify-content: space-between;
    padding-left: 11px;
    padding-right: 11px;
}
.stack {
    display: flex;
    flex-direction: column;
}
.stack button {
    display: flex;
    align-items: center;
    gap: 4px;
    height: 23px;
}
.stack .gap {
    margin-left: 6px;
}
.g-cell .group-body {
    padding-left: 11px;
}
.collapse {
    margin-left: auto;
    align-self: flex-end;
    padding-right: 8px;
    line-height: 8px;
}

/* 数式バー */
.formula-bar {
    display: flex;
    flex: none;
    gap: 8px;
    padding: 11px 4px 11px 5px;
}
.name-box {
    width: 110px;
    height: 30px;
    padding: 2px 6px 0;
    background: #fff;
    border: 1px solid #c6c6c6;
    font-size: 13px;
}
.formula {
    flex: 1;
    display: flex;
    align-items: center;
    height: 30px;
    background: #fff;
    border: 1px solid #c6c6c6;
    padding-right: 4px;
}
.formula input {
    flex: 1;
}

/* シート */
.sheet {
    flex: 1;
    min-height: 0;
    display: flex;
}
.grid-wrap {
    flex: 1;
    min-width: 0;
    overflow: hidden;
    border-right: 1px solid #999;
    border-bottom: 1px solid #999;
    background: #fff;
}
.grid {
    width: 100%;
    table-layout: fixed;
    border-spacing: 0;
    font-family: "Noto Sans CJK JP", sans-serif;
    font-size: 15px;
    font-weight: 300;
    line-height: 22px;
    font-feature-settings: normal;
    color: #000;
}
.w-head { width: 29px; }
.w-std { width: 72px; }
.w-wide { width: 159px; }
.grid th, .grid td {
    height: 25px;
    padding: 0 0 2px;
    border-right: 1px solid #d4d4d4;
    border-bottom: 1px solid #d4d4d4;
    white-space: nowrap;
}
.grid th {
    padding: 0;
    font-weight: 400;
    font-size: 14px;
    vertical-align: bottom;
    background: #e6e6e6;
    color: #222;
    border-right-color: #bbb;
}
.grid thead th {
    border-bottom-color: #999;
}
.grid tbody th {
    border-right-color: #999;
    border-bottom-color: #bbb;
}
.grid th.sel {
    background: #d2d2d2;
    color: #217346;
}
.grid thead th.sel {
    border-bottom: 2px solid #217346;
}
.grid th.corner {
    background: linear-gradient(135deg, #e6e6e6 50%, #b4b4b4 50%) 8px 5px / 17px 17px no-repeat #e6e6e6;
}
.grid .sheet-title {
    font-weight: bold;
    padding-left: 4px;
}
.grid .num {
    text-align: right;
    padding-right: 2px;
}
.above-table td:nth-child(-n+6), .data td:nth-child(-n+6) {
    border-bottom-color: #000;
}
.data td:nth-child(-n+6) {
    border-right-color: #000;
}
.head {
    background: #fff2cc;
    text-align: center;
}
.grid .tall td {
    line-height: 25px;
    height: 50px;
    padding: 0;
}
.grid .tall .head {
    line-height: 24px;
    padding-bottom: 1px;
}
.active {
    background: #ffd966;
    text-align: center;
    outline: 2px solid #217346;
    box-shadow: inset 0 0 0 1px #fff;
}
.vscroll {
    width: 21px;
    display: flex;
    flex-direction: column;
    padding: 2px 3px 1px;
}
.vscroll button, .hscroll button {
    display: flex;
    align-items: center;
    justify-content: center;
    width: 15px;
    height: 15px;
    background: #fff;
    border: 1px solid #ababab;
}
.vthumb {
    flex: 368;
    background: #fff;
    border: 1px solid #ababab;
}
.vtrack {
    flex: 66;
    background: #dadada;
}

/* シート見出し */
.sheet-tabs {
    flex: none;
    height: 27px;
    display: flex;
    align-items: center;
    padding-left: 4px;
    border-bottom: 1px solid #c6c6c6;
}
.nav-arrow {
    display: flex;
    width: 28px;
    justify-content: flex-end;
}
.sheet-tab {
    width: 292px;
    height: 20px;
    border-right: 1px solid #999;
}
.add-sheet {
    display: flex;
    margin-left: 33px;
}
.hscroll {
    width: 526px;
    margin-left: auto;
    margin-right: 21px;
    display: flex;
    align-items: center;
}
.hscroll > svg {
    margin-right: 15px;
}
.hthumb {
    flex: 442;
    height: 15px;
    background: #fff;
    border: 1px solid #ababab;
}
.htrack {
    flex: 37;
    height: 15px;
    background: #dadada;
}

/* ステータスバー */
.status {
    flex: none;
    height: 22px;
    display: flex;
    align-items: center;
    padding: 0 8px 0 6px;
    background: #f3f2f1;
}
.status-text {
    font-size: 11px;
    white-space: nowrap;
}
.views {
    margin-left: auto;
    display: flex;
}
.views button {
    width: 40px;
    height: 22px;
    display: flex;
    align-items: center;
    justify-content: center;
}
.views .on {
    background: #c8c6c4;
}
.zoom {
    display: flex;
    align-items: center;
    gap: 5px;
    padding-left: 5px;
}
.zoom button {
    display: flex;
}
.zoom input {
    appearance: none;
    width: 100px;
    height: 12px;
    background: linear-gradient(#a6a6a6, #a6a6a6) center / 100% 1px no-repeat;
}
.zoom input::-webkit-slider-thumb {
    appearance: none;
    width: 5px;
    height: 12px;
    background: #777;
}
.pct {
    width: 40px;
    text-align: right;
    font-size: 13px;
}

/* ミニ ツール バー */
.minibar {
    position: absolute;
    left: 71px;
    top: 33px;
    padding: 3px;
    background: #fff;
    border: 1px solid #c6c6c6;
    box-shadow: 1px 2px 4px rgba(0, 0, 0, 0.2);
    z-index: 3;
}
.minibar .row {
    height: 24px;
}
.mini-font { width: 69px; }
.mini-size { width: 51px; }
.mini-font select {
    font-size: 11px;
}
.ib.wide {
    width: 25px;
}
.bold {
    font-weight: bold;
}
.italic {
    font-family: "Liberation Serif", serif;
    font-style: italic;
    font-size: 15px;
}

/* 右クリックメニュー */
.menu {
    position: absolute;
    left: 71px;
    top: 104px;
    width: 264px;
    padding-bottom: 1px;
    background: #fff;
    border: 1px solid #c6c6c6;
    box-shadow: 2px 2px 4px rgba(0, 0, 0, 0.2);
    color: #262626;
    z-index: 2;
}
.menu > button, .menu-title {
    display: flex;
    align-items: center;
    width: 100%;
    height: 28px;
    padding: 0 5px 0 13px;
    text-align: left;
    white-space: nowrap;
}
.menu > button > i {
    width: 16px;
}
.menu span {
    margin-left: 9px;
}
.menu .long {
    font-size: 11px;
}
.menu u {
    text-underline-offset: 2px;
}
.menu .menu-title {
    height: 32px;
    font-weight: bold;
}
.menu .sub {
    margin-left: auto;
}
.menu .split {
    border-left: 1px solid #d8d8d8;
}
.menu .hover {
    background: #d0cecd;
}
.menu hr {
    margin: 1px 1px 1px 33px;
    border: 0;
    height: 1px;
    background: #dcdcdc;
}
.paste-opts {
    display: flex;
    gap: 8px;
    height: 32px;
    padding: 0 0 2px 38px;
    align-items: center;
}
.paste-opts button {
    display: flex;
}
.blue {
    color: #1e7fc2;
}

/* 注釈 */
.mark-box {
    position: absolute;
    left: 71px;
    top: 284px;
    width: 265px;
    height: 35px;
    border: 7px solid #f00;
    border-radius: 5px;
    z-index: 4;
}
.mark-arrow {
    position: absolute;
    left: 39px;
    top: 405px;
    z-index: 4;
    filter: drop-shadow(2px 2px 2px rgba(0, 0, 0, 0.4));
}
.mark-step3, .mark-step4 {
    position: absolute;
    display: flex;
    align-items: center;
    gap: 4px;
    color: #f00;
    font-family: "Noto Sans CJK JP", sans-serif;
    font-weight: 900;
    font-feature-settings: normal;
    z-index: 5;
    filter: drop-shadow(1px 3px 2px rgba(0, 0, 0, 0.3));
}
.mark-step3 {
    left: 77px;
    top: 500px;
}
.mark-step4 {
    left: 353px;
    top: 285px;
}
.circle {
    width: 34px;
    height: 34px;
    display: flex;
    align-items: center;
    justify-content: center;
    padding-bottom: 2px;
    border: 2px solid #f00;
    border-radius: 50%;
    box-shadow: 0 0 0 3px #fff, inset 0 0 0 3px #fff;
    font-size: 26px;
    line-height: 28px;
    -webkit-text-stroke: 5px #fff;
    paint-order: stroke fill;
}
.mark-text {
    font-size: 38px;
    font-weight: bold;
    line-height: 36px;
    padding-bottom: 4px;
    white-space: nowrap;
    -webkit-text-stroke: 7px #fff;
    paint-order: stroke fill;
}
```
